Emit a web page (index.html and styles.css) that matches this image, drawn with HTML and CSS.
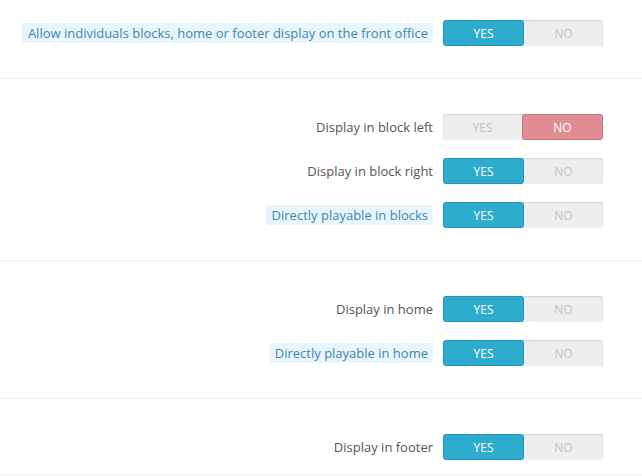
FILE: index.html
```html
<!DOCTYPE html>
<html>
<head>
<meta charset="utf-8">
<link rel="stylesheet" href="styles.css">
</head>
<body>
<form class="form">
  <section class="group group-first">
    <div class="row">
      <div class="label"><span class="hint">Allow individuals blocks, home or footer display on the front office</span></div>
      <div class="switch"><span class="opt on">YES</span><span class="opt">NO</span></div>
    </div>
  </section>
  <section class="group">
    <div class="row">
      <div class="label">Display in block left</div>
      <div class="switch"><span class="opt">YES</span><span class="opt off">NO</span></div>
    </div>
    <div class="row">
      <div class="label">Display in block right</div>
      <div class="switch"><span class="opt on">YES</span><span class="opt">NO</span></div>
    </div>
    <div class="row">
      <div class="label"><span class="hint">Directly playable in blocks</span></div>
      <div class="switch"><span class="opt on">YES</span><span class="opt">NO</span></div>
    </div>
  </section>
  <section class="group">
    <div class="row">
      <div class="label">Display in home</div>
      <div class="switch"><span class="opt on">YES</span><span class="opt">NO</span></div>
    </div>
    <div class="row">
      <div class="label"><span class="hint">Directly playable in home</span></div>
      <div class="switch"><span class="opt on">YES</span><span class="opt">NO</span></div>
    </div>
  </section>
  <section class="group group-last">
    <div class="row">
      <div class="label">Display in footer</div>
      <div class="switch"><span class="opt on">YES</span><span class="opt">NO</span></div>
    </div>
  </section>
</form>
</body>
</html>
```
FILE: styles.css
```css
*, *::before, *::after {
  box-sizing: border-box;
}
html, body {
  margin: 0;
  padding: 0;
  background: #fff;
}
body {
  font-family: "Open Sans", "Liberation Sans", sans-serif;
  font-size: 13px;
  color: #555;
}
.form {
  display: block;
}
.group {
  display: flex;
  flex-direction: column;
  gap: 18px;
  padding: 20px 0 32px;
  border-bottom: 1px solid #eeeeee;
}
.group + .group {
  padding-top: 35px;
}
.group-last {
  padding-bottom: 14px;
}
.row {
  display: grid;
  grid-template-columns: 1fr 160px;
  column-gap: 10px;
  align-items: center;
  padding-right: 39px;
  height: 26px;
}
.label {
  text-align: right;
  line-height: 20px;
  white-space: nowrap;
}
.hint {
  display: inline-block;
  background: #eaf5fb;
  color: #3a86b2;
  border-radius: 3px;
  padding: 0 5px 0 6px;
  line-height: 20px;
}
.switch {
  display: flex;
  height: 26px;
  border-radius: 3px;
  background: #eeeeee;
  box-shadow: inset 0 1px 2px rgba(0,0,0,0.12), 0 0 1px rgba(0,0,0,0.08);
}
.opt {
  flex: 1 1 0;
  display: flex;
  align-items: center;
  justify-content: center;
  font-size: 12px;
  color: #c4c4c4;
  border-radius: 3px;
}
.opt.on {
  background: #2eaccd;
  border: 1px solid #2395b5;
  color: #fff;
}
.opt.off {
  background: #e08e94;
  border: 1px solid #c9727a;
  color: #fff;
}
```
